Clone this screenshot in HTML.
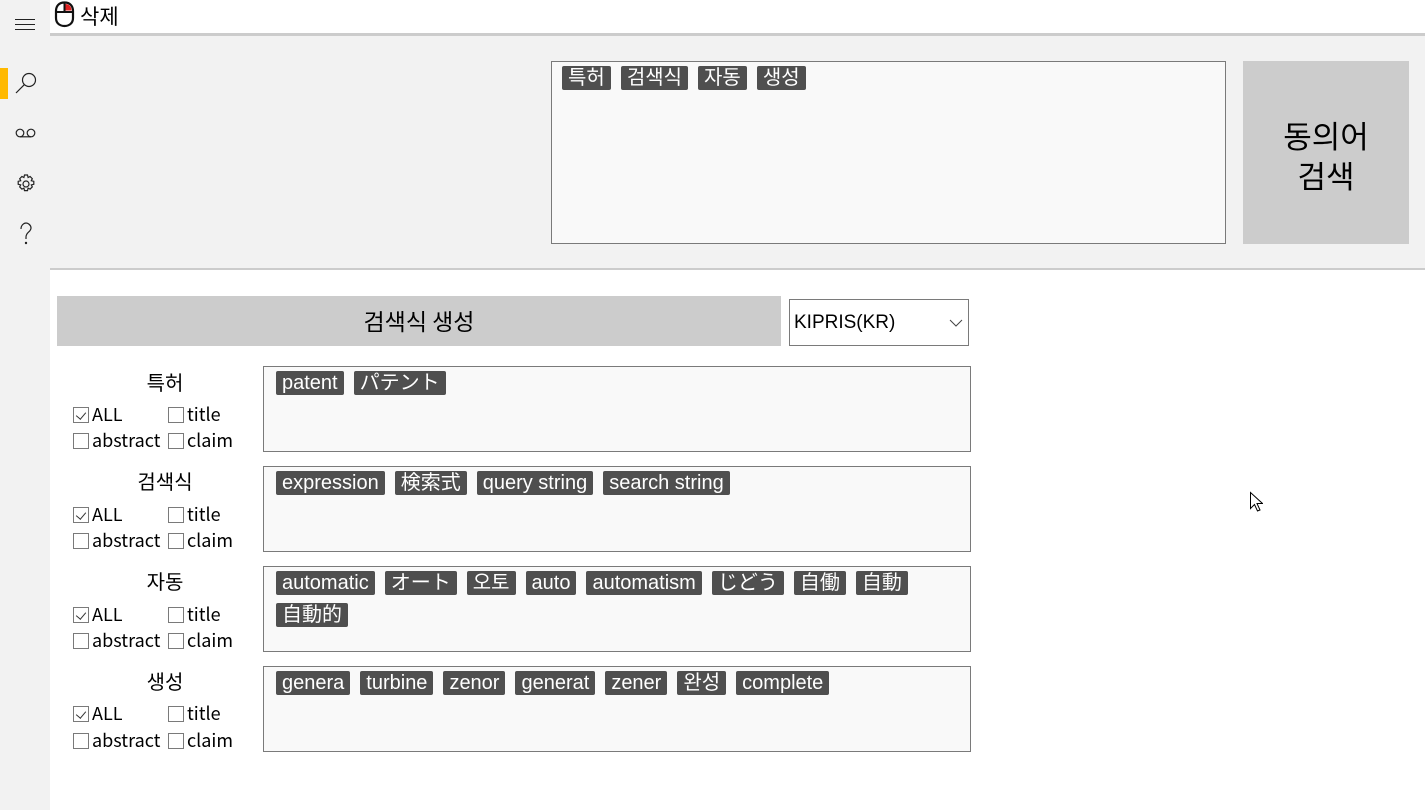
<!DOCTYPE html>
<html><head><meta charset="utf-8"><style>
*{box-sizing:border-box;margin:0;padding:0}
body{width:1425px;height:810px;position:relative;background:#fff;font-family:"Liberation Sans","Noto Sans CJK KR",sans-serif;overflow:hidden;color:#000}
.a{position:absolute}
.side{left:0;top:0;width:50px;height:810px;background:#f2f2f2}
.tag{display:inline-block;background:#4f4f4f;color:#fff;font-size:20px;line-height:24px;height:24px;padding:0 6px;border-radius:2px;margin:0 10px 8px 0;white-space:nowrap;overflow:hidden}
.box{background:#f9f9f9;border:1px solid #7a7a7a}
.tb{left:263px;width:708px;height:86px;padding:4px 0 0 12px;display:flex;flex-wrap:wrap;align-content:flex-start}
.lbl{width:200px;left:65px;text-align:center;font-size:20px;font-family:"Noto Sans CJK KR",sans-serif;left:65px}
.cb{font-size:18px;font-family:"Noto Sans CJK KR",sans-serif;line-height:20px}
.sq{display:inline-block;width:16px;height:16px;border:1px solid #7a7a7a;vertical-align:-2px;margin-right:3px;position:relative;background:#fff}
.ck:after{content:"";position:absolute;left:4px;top:2px;width:5px;height:8px;border:solid #333;border-width:0 1px 1px 0;transform:rotate(40deg)}
</style></head><body>
<div class="a side"></div>
<div class="a" style="left:0;top:68px;width:8px;height:31px;background:#ffb900"></div>
<svg class="a" style="left:0;top:0" width="50" height="260">
<g stroke="#222" stroke-width="1.2" fill="none">
<path d="M15 19.5h20M15 24.5h20M15 29.5h20" stroke-width="1"/>
<circle cx="29" cy="80" r="6.5"/><path d="M24.3 84.7L16 93"/>
<circle cx="20" cy="133" r="3.8"/><circle cx="31" cy="133" r="3.8"/><path d="M20 136.8h11"/>
<circle cx="26" cy="184" r="3"/>
<path d="M24.5 175h3l.6 2.5 2-1 2.2 2.2-1 2 2.5.6v3l-2.5.6 1 2-2.2 2.2-2-1-.6 2.5h-3l-.6-2.5-2 1-2.2-2.2 1-2-2.5-.6v-3l2.5-.6-1-2 2.2-2.2 2 1z"/>
<path d="M21 229c0-4 3-6 5-6s5 2 5 5c0 4-5 4-5 9v2" /><circle cx="26" cy="243" r=".6" fill="#222"/>
</g></svg>
<div class="a" style="left:50px;top:0;width:1375px;height:33px;background:#fff"></div>
<div class="a" style="left:50px;top:33px;width:1375px;height:3px;background:#ccc"></div>
<div class="a" style="left:50px;top:36px;width:1375px;height:233px;background:#f2f2f2"></div>
<div class="a" style="left:50px;top:268px;width:1375px;height:2px;background:#ccc"></div>
<svg class="a" style="left:54px;top:1px" width="22" height="27"><path d="M10.5 1.5C5 1.5 2 5 2 10v7c0 5 3.5 8 8.5 8s8.5-3 8.5-8v-7c0-5-3-8.5-8.5-8.5z" fill="#fff" stroke="#111" stroke-width="2.2"/><path d="M11.5 3c3 0 6 2 6 6.5h-6z" fill="#e02020"/><path d="M2 11h17M10.5 1.5v10" stroke="#111" stroke-width="2"/></svg>
<div class="a" style="left:80px;top:3px;font-size:21px;font-family:'Noto Sans CJK KR',sans-serif;line-height:26px">삭제</div>
<div class="a box" style="left:551px;top:61px;width:675px;height:183px;padding:4px 0 0 10px"><span class="tag">특허</span><span class="tag">검색식</span><span class="tag">자동</span><span class="tag">생성</span></div>
<div class="a" style="left:1243px;top:61px;width:166px;height:183px;background:#ccc;display:flex;align-items:center;justify-content:center;text-align:center;font-size:31px;line-height:40px;font-family:'Noto Sans CJK KR',sans-serif;padding-top:4px">동의어<br>검색</div>
<div class="a" style="left:57px;top:296px;width:724px;height:50px;background:#ccc;text-align:center;line-height:48px;font-size:23px;font-family:'Noto Sans CJK KR',sans-serif">검색식 생성</div>
<div class="a" style="left:789px;top:299px;width:180px;height:47px;border:1px solid #7a7a7a;background:#fff;font-size:19px;line-height:45px;padding-left:4px">KIPRIS(KR)<svg style="position:absolute;right:5px;top:18px" width="14" height="10"><path d="M1 2l6 6 6-6" stroke="#444" fill="none"/></svg></div>

<div class="a lbl" style="top:367px">특허</div>
<div class="a cb" style="left:73px;top:404px"><span class="sq ck"></span>ALL</div>
<div class="a cb" style="left:168px;top:404px"><span class="sq"></span>title</div>
<div class="a cb" style="left:73px;top:430px"><span class="sq"></span>abstract</div>
<div class="a cb" style="left:168px;top:430px"><span class="sq"></span>claim</div>
<div class="a box tb" style="top:366px"><span class="tag">patent</span><span class="tag">パテント</span></div>

<div class="a lbl" style="top:466px">검색식</div>
<div class="a cb" style="left:73px;top:504px"><span class="sq ck"></span>ALL</div>
<div class="a cb" style="left:168px;top:504px"><span class="sq"></span>title</div>
<div class="a cb" style="left:73px;top:530px"><span class="sq"></span>abstract</div>
<div class="a cb" style="left:168px;top:530px"><span class="sq"></span>claim</div>
<div class="a box tb" style="top:466px"><span class="tag">expression</span><span class="tag">検索式</span><span class="tag">query string</span><span class="tag">search string</span></div>

<div class="a lbl" style="top:566px">자동</div>
<div class="a cb" style="left:73px;top:604px"><span class="sq ck"></span>ALL</div>
<div class="a cb" style="left:168px;top:604px"><span class="sq"></span>title</div>
<div class="a cb" style="left:73px;top:630px"><span class="sq"></span>abstract</div>
<div class="a cb" style="left:168px;top:630px"><span class="sq"></span>claim</div>
<div class="a box tb" style="top:566px"><span class="tag">automatic</span><span class="tag">オート</span><span class="tag">오토</span><span class="tag">auto</span><span class="tag">automatism</span><span class="tag">じどう</span><span class="tag">自働</span><span class="tag">自動</span><span class="tag">自動的</span></div>

<div class="a lbl" style="top:666px">생성</div>
<div class="a cb" style="left:73px;top:703px"><span class="sq ck"></span>ALL</div>
<div class="a cb" style="left:168px;top:703px"><span class="sq"></span>title</div>
<div class="a cb" style="left:73px;top:730px"><span class="sq"></span>abstract</div>
<div class="a cb" style="left:168px;top:730px"><span class="sq"></span>claim</div>
<div class="a box tb" style="top:666px"><span class="tag">genera</span><span class="tag">turbine</span><span class="tag">zenor</span><span class="tag">generat</span><span class="tag">zener</span><span class="tag">완성</span><span class="tag">complete</span></div>

<svg class="a" style="left:1249px;top:491px" width="14" height="22"><path d="M1.5 1.5v16l4-4 3 6.5 2.5-1-3-6.5h5.5z" fill="#fff" stroke="#000"/></svg>
</body></html>
